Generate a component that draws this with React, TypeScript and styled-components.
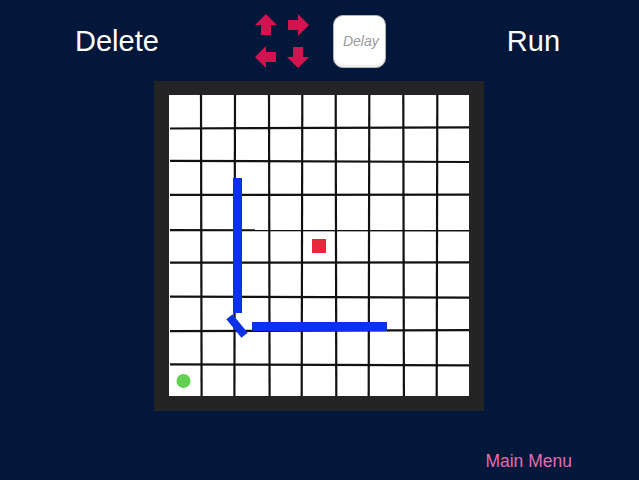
import { createGlobalStyle, styled } from 'styled-components';

const GlobalStyle = createGlobalStyle`
  html, body {
    margin: 0;
    padding: 0;
    background: #021739;
  }
  body {
    font-family: "Liberation Sans", Arial, sans-serif;
  }
`;

type Dir = 'up' | 'right' | 'down' | 'left';

const rotation: Record<Dir, number> = { up: 0, right: 90, down: 180, left: 270 };

const vLines = [32, 66, 100, 133.3, 166.7, 200.3, 234.3, 268.3];
const hLines = [33, 66.3, 100.3, 134.7, 168, 202, 235.7, 269.7];

const Arrow = ({ dir }: { dir: Dir }) => (
  <ArrowSvg viewBox="0 0 22 22" aria-label={dir}>
    <polygon
      points="11,0 22,11 16,11 16,21 6,21 6,11 0,11"
      fill="#d3124f"
      transform={`rotate(${rotation[dir]} 11 11)`}
    />
  </ArrowSvg>
);

const Grid = () => (
  <GridSvg viewBox="0 0 300 301">
    <rect x="0" y="0" width="300" height="301" fill="#fff" />
    {vLines.map((x, i) => (
      <line
        key={`v${i}`}
        x1={x}
        y1={0}
        x2={x + (i % 2 === 0 ? 0.6 : -0.6)}
        y2={301}
        stroke="#111"
        strokeWidth="2.2"
      />
    ))}
    {hLines.map((y, i) => (
      <line
        key={`h${i}`}
        x1={1}
        y1={y + (i % 3 === 0 ? 0.5 : -0.4)}
        x2={300}
        y2={y + (i % 2 === 0 ? -0.6 : 0.7)}
        stroke="#111"
        strokeWidth="2.2"
      />
    ))}
    <rect x="64" y="83" width="9" height="135" fill="#0b32e6" />
    <rect x="83" y="227" width="135" height="9" fill="#0b32e6" />
    <rect x="56" y="227" width="24" height="8" fill="#0b32e6" transform="rotate(51 68 231)" />
    <rect x="143" y="144" width="14" height="14" fill="#e8283a" />
    <circle cx="14.5" cy="286" r="7" fill="#62cf52" />
  </GridSvg>
);

const App = () => (
  <Page>
    <GlobalStyle />
    <Toolbar>
      <BigLabel $ml={75}>Delete</BigLabel>
      <ArrowPad $ml={96}>
        <Arrow dir="up" />
        <Arrow dir="right" />
        <Arrow dir="left" />
        <Arrow dir="down" />
      </ArrowPad>
      <DelayButton>Delay</DelayButton>
      <BigLabel $ml={121}>Run</BigLabel>
    </Toolbar>
    <BoardRow>
      <Board>
        <Grid />
      </Board>
    </BoardRow>
    <Footer>
      <MenuLink>Main Menu</MenuLink>
    </Footer>
  </Page>
);

const Page = styled.div`
  width: 639px;
  height: 480px;
  background: #021739;
  display: flex;
  flex-direction: column;
  overflow: hidden;
`;

const Toolbar = styled.div`
  height: 81px;
  display: flex;
  align-items: center;
`;

const BigLabel = styled.div<{ $ml: number }>`
  margin-left: ${(p) => p.$ml}px;
  color: #fff;
  font-size: 29px;
  line-height: 1;
  padding-top: 2px;
`;

const ArrowPad = styled.div<{ $ml: number }>`
  margin-left: ${(p) => p.$ml}px;
  display: grid;
  grid-template-columns: 22px 22px;
  column-gap: 10px;
  row-gap: 10px;
  padding-top: 1px;
`;

const ArrowSvg = styled.svg`
  width: 22px;
  height: 22px;
  display: block;
`;

const DelayButton = styled.button`
  margin-left: 24px;
  width: 53px;
  height: 53px;
  border-radius: 10px;
  border: 1px solid #b5b5b5;
  background: #fff;
  box-shadow: inset 0 -2px 3px rgba(0, 0, 0, 0.08);
  color: #9a9a9a;
  font-family: "Liberation Sans", Arial, sans-serif;
  font-style: italic;
  font-size: 14px;
  padding: 0 0 0 3px;
  margin-top: 1px;
`;

const BoardRow = styled.div`
  display: flex;
  justify-content: center;
`;

const Board = styled.div`
  width: 330px;
  height: 330px;
  box-sizing: border-box;
  padding: 14px 15px 15px 15px;
  background: #242424;
  margin-right: 1px;
`;

const GridSvg = styled.svg`
  width: 300px;
  height: 301px;
  display: block;
`;

const Footer = styled.div`
  display: flex;
  justify-content: flex-end;
  padding: 42px 67px 0 0;
`;

const MenuLink = styled.div`
  color: #e36cb0;
  font-size: 17.5px;
  line-height: 1;
`;

export default App;
